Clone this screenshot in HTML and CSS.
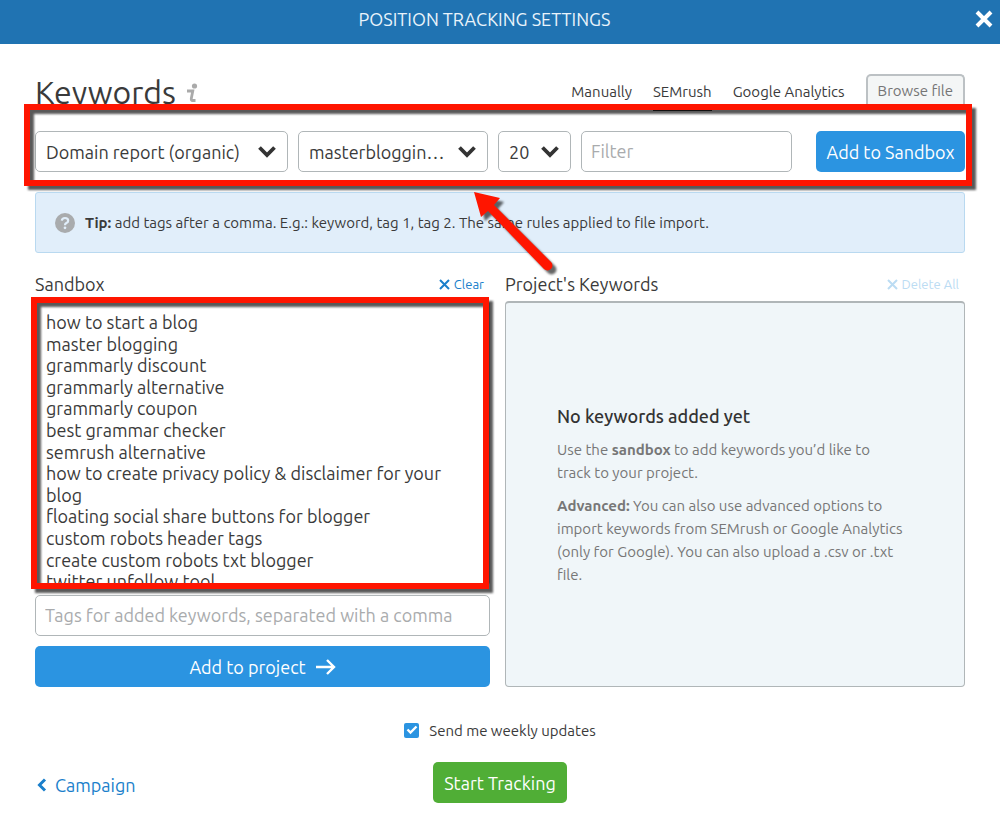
FILE: index.html
```
<!DOCTYPE html>
<html lang="en">
<head>
  <meta charset="UTF-8" />
  <meta name="viewport" content="width=device-width, initial-scale=1.0"/>
  <title>Position Tracking Settings</title>
  <link rel="stylesheet" href="styles.css">
</head>
<body>
  <header class="top-bar">
    <h1>POSITION TRACKING SETTINGS</h1>
    <button type="button" class="close-btn" aria-label="Close">
      <svg width="18" height="18" viewBox="0 0 18 18"><path d="M2 2l14 14M16 2L2 16" stroke="#fff" stroke-width="4"/></svg>
    </button>
  </header>

  <main>
    <div class="title-row">
      <h2>Keywords</h2>
      <svg class="info" width="12" height="20" viewBox="0 0 12 20"><circle cx="8.500" cy="3" r="2.600" fill="#aaa"/><path d="M1 8h5.800L5.300 15.500q-.3 2 1.200 2h3" fill="none" stroke="#aaa" stroke-width="2.800"/></svg>
      <nav class="tabs">
        <a href="#">Manually</a>
        <a href="#" class="active">SEMrush</a>
        <a href="#">Google Analytics</a>
        <button type="button" class="browse-btn">Browse file</button>
      </nav>
    </div>

    <form class="filters">
      <div class="select-box select-report">
        <select aria-label="Report type"><option>Domain report (organic)</option></select>
        <svg width="18" height="13" viewBox="0 0 18 13"><path d="M1.500 2.500L9 10l7.500-7.500" fill="none" stroke="#333" stroke-width="3.800"/></svg>
      </div>
      <div class="select-box select-domain">
        <select aria-label="Domain"><option>masterbloggin…</option></select>
        <svg width="18" height="13" viewBox="0 0 18 13"><path d="M1.500 2.500L9 10l7.500-7.500" fill="none" stroke="#333" stroke-width="3.800"/></svg>
      </div>
      <div class="select-box select-count">
        <select aria-label="Number of keywords"><option>20</option></select>
        <svg width="18" height="13" viewBox="0 0 18 13"><path d="M1.500 2.500L9 10l7.500-7.500" fill="none" stroke="#333" stroke-width="3.800"/></svg>
      </div>
      <input type="text" class="field filter-input" placeholder="Filter" aria-label="Filter">
      <button type="button" class="btn btn-sandbox">Add to Sandbox</button>

      <div class="marker marker-filters"></div>
      <svg class="arrow" width="90" height="90" viewBox="0 0 90 90"><path d="M1 1L27 7L21 14L78 71A4.500 4.500 0 0 1 71 78L15 20L8 26Z" fill="#ff1500"/></svg>
    </form>

    <div class="tip">
      <svg width="20" height="20" viewBox="0 0 22 22"><circle cx="11" cy="11" r="11" fill="#a9abad"/><path d="M7.500 8.500Q7.800 5.500 11 5.500Q14.500 5.500 14.500 8.400Q14.500 10 12.500 11Q11 11.800 11 13.500" fill="none" stroke="#e1eefa" stroke-width="2.400"/><circle cx="11" cy="16.300" r="1.500" fill="#e1eefa"/></svg>
      <p><strong>Tip:</strong> add tags after a comma. E.g.: keyword, tag 1, tag 2. The same rules applied to file import.</p>
    </div>

    <div class="columns">
      <section class="column">
        <div class="column-head">
          <label for="sandbox">Sandbox</label>
          <button type="button" class="link-btn">
            <svg width="11" height="11" viewBox="0 0 11 11"><path d="M1 1l9 9M10 1l-9 9" stroke="currentColor" stroke-width="2"/></svg>
            Clear
          </button>
        </div>
        <div class="sandbox-box">
          <textarea id="sandbox">how to start a blog
master blogging
grammarly discount
grammarly alternative
grammarly coupon
best grammar checker
semrush alternative
how to create privacy policy &amp; disclaimer for your blog
floating social share buttons for blogger
custom robots header tags
create custom robots txt blogger
twitter unfollow tool</textarea>
          <div class="marker marker-sandbox"></div>
        </div>
        <input type="text" class="field" placeholder="Tags for added keywords, separated with a comma" aria-label="Tags">
        <button type="button" class="btn">
          Add to project
          <svg width="20" height="18" viewBox="0 0 20 18"><path d="M0 9h18M11 2l7 7-7 7" fill="none" stroke="#fff" stroke-width="2.400"/></svg>
        </button>
      </section>

      <section class="column">
        <div class="column-head">
          <h3>Project's Keywords</h3>
          <button type="button" class="link-btn" disabled>
            <svg width="11" height="11" viewBox="0 0 11 11"><path d="M1 1l9 9M10 1l-9 9" stroke="currentColor" stroke-width="2"/></svg>
            Delete All
          </button>
        </div>
        <div class="empty-panel">
          <h4>No keywords added yet</h4>
          <p>Use the <strong>sandbox</strong> to add keywords you’d like to<br>track to your project.</p>
          <p><strong>Advanced:</strong> You can also use advanced options to<br>import keywords from SEMrush or Google Analytics<br>(only for Google). You can also upload a .csv or .txt<br>file.</p>
        </div>
      </section>
    </div>

    <div class="updates">
      <span class="check">
        <input type="checkbox" id="weekly" checked>
        <svg width="12" height="10" viewBox="0 0 12 10"><path d="M1.500 4.500L4.500 7.500L10.500 1.500" fill="none" stroke="#fff" stroke-width="2.400"/></svg>
      </span>
      <label for="weekly">Send me weekly updates</label>
    </div>

    <footer>
      <a href="#" class="back-link">
        <svg width="10" height="14" viewBox="0 0 10 14"><path d="M8 1.500L2.500 7L8 12.500" fill="none" stroke="currentColor" stroke-width="3"/></svg>
        Campaign
      </a>
      <button type="submit" class="btn btn-start">Start Tracking</button>
    </footer>
  </main>
</body>
</html>
```
FILE: styles.css
```
* {
  box-sizing: border-box;
}

body {
  margin: 0;
  background: #fff;
  color: #3a3a3a;
  font-family: 'Ubuntu', 'Noto Sans', sans-serif;
  font-size: 15px;
}

h1, h2, h3, h4, p {
  margin: 0;
  font-weight: 400;
}

button, input, select, textarea {
  font-family: inherit;
  color: inherit;
  margin: 0;
}

button {
  border: none;
  cursor: pointer;
}

a {
  color: inherit;
  text-decoration: none;
}

.top-bar {
  display: flex;
  align-items: center;
  height: 44px;
  padding-bottom: 7px;
  background: #2073b2;
  color: #e9f3fb;
}

.top-bar h1 {
  flex: 1;
  font-size: 18px;
  text-align: center;
}

.close-btn {
  display: flex;
  width: 31px;
  padding: 0 6px;
  background: none;
}

main {
  padding: 28px 35px 20px;
}

.title-row {
  display: flex;
  align-items: flex-start;
  height: 59px;
}

.title-row h2 {
  font-size: 32px;
  line-height: 40px;
}

.info {
  margin: 11px 0 0 10px;
}

.tabs {
  display: flex;
  align-items: flex-start;
  gap: 21px;
  margin-left: auto;
}

.tabs a {
  height: 39px;
  line-height: 40px;
}

.tabs .active {
  border-bottom: 2px solid #333;
}

.browse-btn {
  height: 33px;
  margin-top: 2px;
  padding: 0 10px 2px;
  border: 2px solid #bcc1c4;
  border-bottom: none;
  border-radius: 5px 5px 0 0;
  background: #f4f6f6;
  color: #757575;
  font-size: 15px;
}

.filters {
  position: relative;
  display: flex;
  gap: 10px;
}

.select-box {
  display: grid;
  flex: none;
  align-items: center;
}

.select-box select,
.select-box svg {
  grid-area: 1 / 1;
}

.select-box svg {
  justify-self: end;
  margin-right: 12px;
  pointer-events: none;
}

.select-box select,
.field {
  width: 100%;
  min-width: 0;
  height: 41px;
  padding: 0 10px;
  border: 1px solid #b0b6b8;
  border-radius: 5px;
  background: #fff;
  font-size: 18px;
  appearance: none;
}

.select-report {
  width: 253px;
}

.select-domain {
  width: 190px;
}

.select-count {
  width: 73px;
}

.field {
  padding: 0 9px 2px;
}

.field::placeholder {
  color: #a9abad;
}

.filter-input {
  flex: 1;
  width: auto;
}

.btn {
  display: flex;
  align-items: center;
  justify-content: center;
  gap: 10px;
  height: 41px;
  padding: 0 11px;
  border-radius: 5px;
  background: #2b94e1;
  color: #fff;
  font-size: 18px;
}

.btn-sandbox {
  flex: none;
  width: 149px;
  margin-left: 14px;
  white-space: nowrap;
}

/* red callouts */
.marker {
  position: absolute;
  border: 6px solid #ff1500;
  filter: drop-shadow(4px 4px 1px rgba(0, 0, 0, 0.65));
  pointer-events: none;
}

.marker-filters {
  inset: -27px -7px -14px -11px;
}

.marker-sandbox {
  inset: -4px 1px -4px -4px;
}

.arrow {
  position: absolute;
  left: 438px;
  top: 60px;
  filter: drop-shadow(4px 4px 1px rgba(0, 0, 0, 0.6));
  pointer-events: none;
}

.tip {
  display: flex;
  align-items: center;
  gap: 10px;
  min-height: 61px;
  margin-top: 20px;
  padding: 0 19px;
  border: 1px solid #b9d9f0;
  border-radius: 3px;
  background: #e1eefa;
}

.columns {
  display: grid;
  grid-template-columns: 455fr 460fr;
  gap: 15px;
  margin-top: 17px;
}

.column {
  display: flex;
  flex-direction: column;
  gap: 10px;
}

.column-head {
  display: flex;
  align-items: center;
  justify-content: space-between;
  height: 28px;
  margin-bottom: -7px;
  padding-right: 6px;
  font-size: 18px;
}

.column-head h3 {
  font-size: 18px;
}

.link-btn {
  display: flex;
  align-items: center;
  gap: 4px;
  padding: 0;
  background: none;
  color: #1a7fcb;
  font-size: 13px;
}

.link-btn:disabled {
  color: #bbdcf3;
}

.sandbox-box {
  position: relative;
  display: flex;
}

.sandbox-box textarea {
  flex: 1;
  height: 284px;
  padding: 10px 10px 0;
  border: 1px solid #b0b6b8;
  border-radius: 3px;
  font-size: 18px;
  line-height: 1.2;
  resize: none;
  overflow: hidden;
}

.empty-panel {
  flex: 1;
  display: flex;
  flex-direction: column;
  justify-content: center;
  gap: 10px;
  padding: 2px 51px 0;
  border: 1px solid #b0b6b8;
  border-top-width: 2px;
  border-radius: 4px;
  background: #f0f6f9;
  color: #777;
  line-height: 23px;
}

.empty-panel h4 {
  color: #333;
  font-size: 18px;
  font-weight: 500;
}

.updates {
  display: flex;
  align-items: center;
  justify-content: center;
  gap: 10px;
  margin-top: 30px;
  height: 26px;
}

.check {
  display: grid;
  place-items: center;
}

.check input,
.check svg {
  grid-area: 1 / 1;
}

.check svg {
  pointer-events: none;
}

.check input {
  width: 15px;
  height: 15px;
  border-radius: 2px;
  background: #2b94e1;
  appearance: none;
}

footer {
  display: grid;
  grid-template-columns: 1fr auto 1fr;
  align-items: center;
  margin-top: 19px;
}

.back-link {
  display: flex;
  align-items: center;
  gap: 8px;
  padding: 5px 2px 0;
  color: #1a7fcb;
  font-size: 18px;
}

.btn-start {
  width: 134px;
  white-space: nowrap;
  background: #50ae36;
}
```
